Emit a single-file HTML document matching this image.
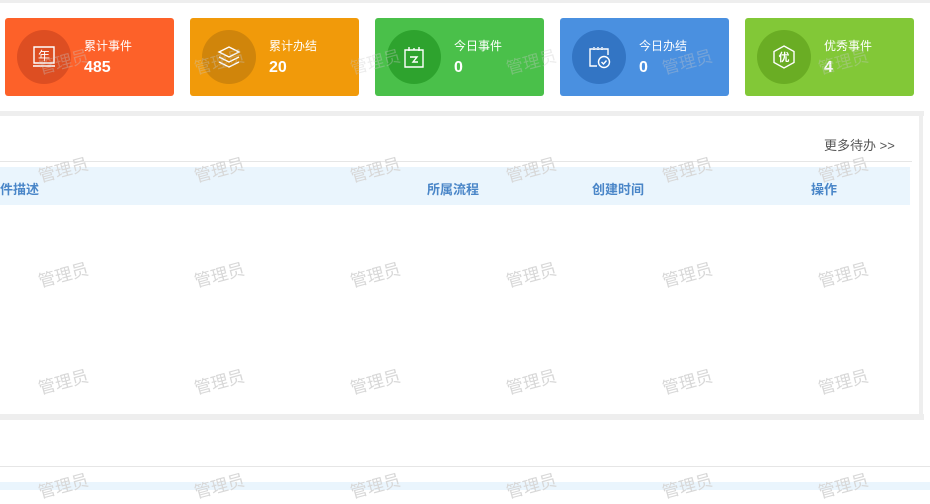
<!DOCTYPE html>
<html><head><meta charset="utf-8"><style>
*{margin:0;padding:0;box-sizing:border-box}
body{width:930px;height:490px;position:relative;overflow:hidden;background:#fff;font-family:"Liberation Sans","Noto Sans CJK SC",sans-serif}
.abs{position:absolute}
.card{position:absolute;top:18px;width:169px;height:78px;border-radius:3px;color:#fff}
.card .c{position:absolute;left:12px;top:12px;width:54px;height:54px;border-radius:50%}
.card .c svg{position:absolute;left:13px;top:13px}
.card .t{position:absolute;left:79px;top:19px;font-size:12px}
.card .n{position:absolute;left:79px;top:41px;font-size:16px;font-weight:bold}
.wm{position:absolute;font-size:17px;color:#d8d8d8;transform:rotate(-15deg);white-space:nowrap;width:60px;text-align:center;margin-left:-30px;margin-top:-12px}
.wm.l{color:rgba(200,200,200,0.35)}
.th{position:absolute;top:179px;font-size:13px;font-weight:bold;color:#4a86c8}
</style></head><body>
<div class="abs" style="left:0;top:0;width:930px;height:3px;background:#eee"></div>

<div class="card" style="left:5px;background:#fd6129"><div class="c" style="background:#dd4e22">
<svg width="28" height="28" viewBox="0 0 28 28" fill="none" stroke="#fff" stroke-width="1.4"><path d="M4 4h20v16H4z"/><path d="M3 23h22"/><text x="14" y="17" font-size="12" fill="#fff" stroke="none" text-anchor="middle" font-family="Noto Sans CJK SC">年</text></svg></div>
<div class="t">累计事件</div><div class="n">485</div></div>

<div class="card" style="left:190px;background:#f19a0a"><div class="c" style="background:#d0850b">
<svg width="28" height="28" viewBox="0 0 28 28" fill="none" stroke="#fff" stroke-width="1.4"><path d="M14 4l10 5-10 5-10-5z"/><path d="M4 14l10 5 10-5"/><path d="M4 19l10 5 10-5"/></svg></div>
<div class="t">累计办结</div><div class="n">20</div></div>

<div class="card" style="left:375px;background:#4ac04a"><div class="c" style="background:#2ea32e">
<svg width="28" height="28" viewBox="0 0 28 28" fill="none" stroke="#fff" stroke-width="1.4"><path d="M5 7h18v17H5z"/><path d="M9 4v4M19 4v4M14 5v2"/><path d="M10 14h7l-4 5h5"/></svg></div>
<div class="t">今日事件</div><div class="n">0</div></div>

<div class="card" style="left:560px;background:#4a90e0"><div class="c" style="background:#3375c4">
<svg width="28" height="28" viewBox="0 0 28 28" fill="none" stroke="#fff" stroke-width="1.4"><path d="M12 23H5V6h18v6" /><path d="M9 4v3M13 4v3M17 4v3" stroke-dasharray="1 1"/><circle cx="19" cy="19" r="5.5"/><path d="M16.5 19l2 2 3-3.5"/></svg></div>
<div class="t">今日办结</div><div class="n">0</div></div>

<div class="card" style="left:745px;background:#82c837"><div class="c" style="background:#6aad24">
<svg width="28" height="28" viewBox="0 0 28 28" fill="none" stroke="#fff" stroke-width="1.4"><path d="M14 3l10 5.5v11L14 25 4 19.5v-11z"/><text x="14" y="18" font-size="11" font-weight="bold" fill="#fff" stroke="none" text-anchor="middle" font-family="Noto Sans CJK SC">优</text></svg></div>
<div class="t">优秀事件</div><div class="n">4</div></div>

<div class="abs" style="left:0;top:111px;width:924px;height:5px;background:#eee"></div>
<div class="abs" style="left:919px;top:111px;width:4px;height:305px;background:#eee"></div>
<div class="abs" style="left:0;top:414px;width:924px;height:6px;background:#eee"></div>
<div class="abs" style="left:824px;top:135px;font-size:13px;color:#555">更多待办 &gt;&gt;</div>
<div class="abs" style="left:0;top:161px;width:912px;height:1px;background:#e6e6e6"></div>
<div class="abs" style="left:0;top:167px;width:910px;height:38px;background:#eaf5fd"></div>
<div class="th" style="left:0">件描述</div>
<div class="th" style="left:427px">所属流程</div>
<div class="th" style="left:592px">创建时间</div>
<div class="th" style="left:811px">操作</div>

<div class="abs" style="left:0;top:466px;width:930px;height:1px;background:#e6e6e6"></div>
<div class="abs" style="left:0;top:482px;width:930px;height:8px;background:#eaf5fd"></div>

<div class="wm l" style="left:63px;top:60px">管理员</div><div class="wm l" style="left:219px;top:60px">管理员</div><div class="wm l" style="left:375px;top:60px">管理员</div><div class="wm l" style="left:531px;top:60px">管理员</div><div class="wm l" style="left:687px;top:60px">管理员</div><div class="wm l" style="left:843px;top:60px">管理员</div>
<div class="wm" style="left:63px;top:168px">管理员</div><div class="wm" style="left:219px;top:168px">管理员</div><div class="wm" style="left:375px;top:168px">管理员</div><div class="wm" style="left:531px;top:168px">管理员</div><div class="wm" style="left:687px;top:168px">管理员</div><div class="wm" style="left:843px;top:168px">管理员</div>
<div class="wm" style="left:63px;top:273px">管理员</div><div class="wm" style="left:219px;top:273px">管理员</div><div class="wm" style="left:375px;top:273px">管理员</div><div class="wm" style="left:531px;top:273px">管理员</div><div class="wm" style="left:687px;top:273px">管理员</div><div class="wm" style="left:843px;top:273px">管理员</div>
<div class="wm" style="left:63px;top:380px">管理员</div><div class="wm" style="left:219px;top:380px">管理员</div><div class="wm" style="left:375px;top:380px">管理员</div><div class="wm" style="left:531px;top:380px">管理员</div><div class="wm" style="left:687px;top:380px">管理员</div><div class="wm" style="left:843px;top:380px">管理员</div>
<div class="wm" style="left:63px;top:484px">管理员</div><div class="wm" style="left:219px;top:484px">管理员</div><div class="wm" style="left:375px;top:484px">管理员</div><div class="wm" style="left:531px;top:484px">管理员</div><div class="wm" style="left:687px;top:484px">管理员</div><div class="wm" style="left:843px;top:484px">管理员</div>
</body></html>
